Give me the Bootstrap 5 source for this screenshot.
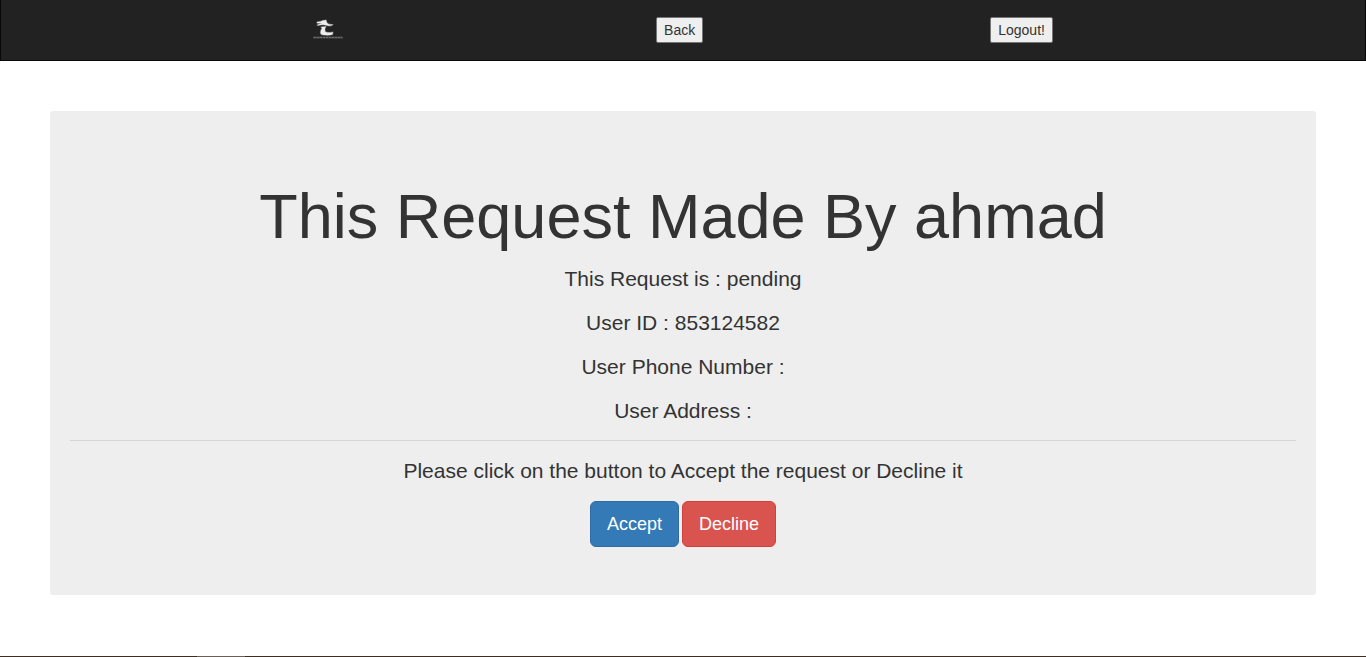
<!DOCTYPE html>
<html lang="en">
<head>
<meta charset="utf-8">
<meta name="viewport" content="width=device-width, initial-scale=1">
<title>Request</title>
<link href="https://cdn.jsdelivr.net/npm/bootstrap@5.3.0/dist/css/bootstrap.min.css" rel="stylesheet">
<style>
body { font-family: "Liberation Sans", Arial, sans-serif; font-size: 14px; color: #333; background: #fff; }
.topbar { background: #222; border: 1px solid #080808; border-top: 0; height: 61px; }
.brand-link { margin: 0 26px 0 25px; line-height: 0; }
.plain-btn { height: 26px; padding: 0 7px; font-size: 14px; line-height: 22px; color: #333; background: #efefef; border: 1px solid #767676; border-radius: 2px; }
.logout-form { margin-right: 25px; }
.panel { margin: 50px; padding: 71px 20px 48px; background: #eee; border-radius: 3px; }
.panel h1 { font-size: 63px; line-height: 69px; font-weight: 400; margin-bottom: 13px; }
.panel p { font-size: 21px; line-height: 29px; margin-bottom: 15px; }
.panel hr { margin: 0 0 15px; border-top: 1px solid #d5d5d5; opacity: 1; }
.panel .actions { gap: 3px; padding-top: 1px; }
.panel .btn { height: 46px; padding: 0 16px; font-size: 18px; line-height: 24px; border-radius: 6px; }
.btn-accept, .btn-accept:hover { color: #fff; background: #337ab7; border-color: #2e6da4; }
.btn-decline, .btn-decline:hover { color: #fff; background: #d9534f; border-color: #d43f3a; }
.edge { height: 1px; background: linear-gradient(to right, #3d2d22 197px, #6b5e57 197px 245px, #3d2d22 245px); }
</style>
</head>
<body class="d-flex flex-column min-vh-100">
<nav class="topbar d-flex align-items-center justify-content-evenly">
  <a class="brand-link" href="#" aria-label="Home">
    <svg width="30" height="30" viewBox="0 0 30 30">
      <g fill="#eee" stroke="#eee" stroke-opacity=".35" stroke-width="1.2" stroke-linejoin="round">
        <path d="M4 7 Q8 6.500 10 5.500 L13 5 L14 8 Q16 10 20 9.500 Q18 11.500 14 10.500 Q10 9 5 10.500 L4 10 Q7 9 9 8 Q6 8.500 4 8Z"/>
        <path d="M8 12 L13 11.500 Q11 14 12.500 17 Q17 18 20 17 L19.500 19.500 Q17 20.500 11 20 Q7.500 20 7.500 17.500 Q7.500 15 9 13.500Z"/>
      </g>
      <path d="M0 22.500H30" stroke="#484848" stroke-width="2"/>
      <path d="M1 22.500H29" stroke="#707070" stroke-width="1" stroke-dasharray="2 1"/>
    </svg>
  </a>
  <button type="button" class="plain-btn">Back</button>
  <form class="logout-form"><button type="button" class="plain-btn">Logout!</button></form>
</nav>
<main class="panel text-center">
  <h1>This Request Made By ahmad</h1>
  <p>This Request is : pending</p>
  <p>User ID : 853124582</p>
  <p>User Phone Number :</p>
  <p>User Address :</p>
  <hr>
  <p>Please click on the button to Accept the request or Decline it</p>
  <div class="actions d-flex justify-content-center">
    <button type="button" class="btn btn-accept">Accept</button>
    <button type="button" class="btn btn-decline">Decline</button>
  </div>
</main>
<div class="edge mt-auto"></div>
<script src="https://cdn.jsdelivr.net/npm/bootstrap@5.3.0/dist/js/bootstrap.bundle.min.js"></script>
</body>
</html>
